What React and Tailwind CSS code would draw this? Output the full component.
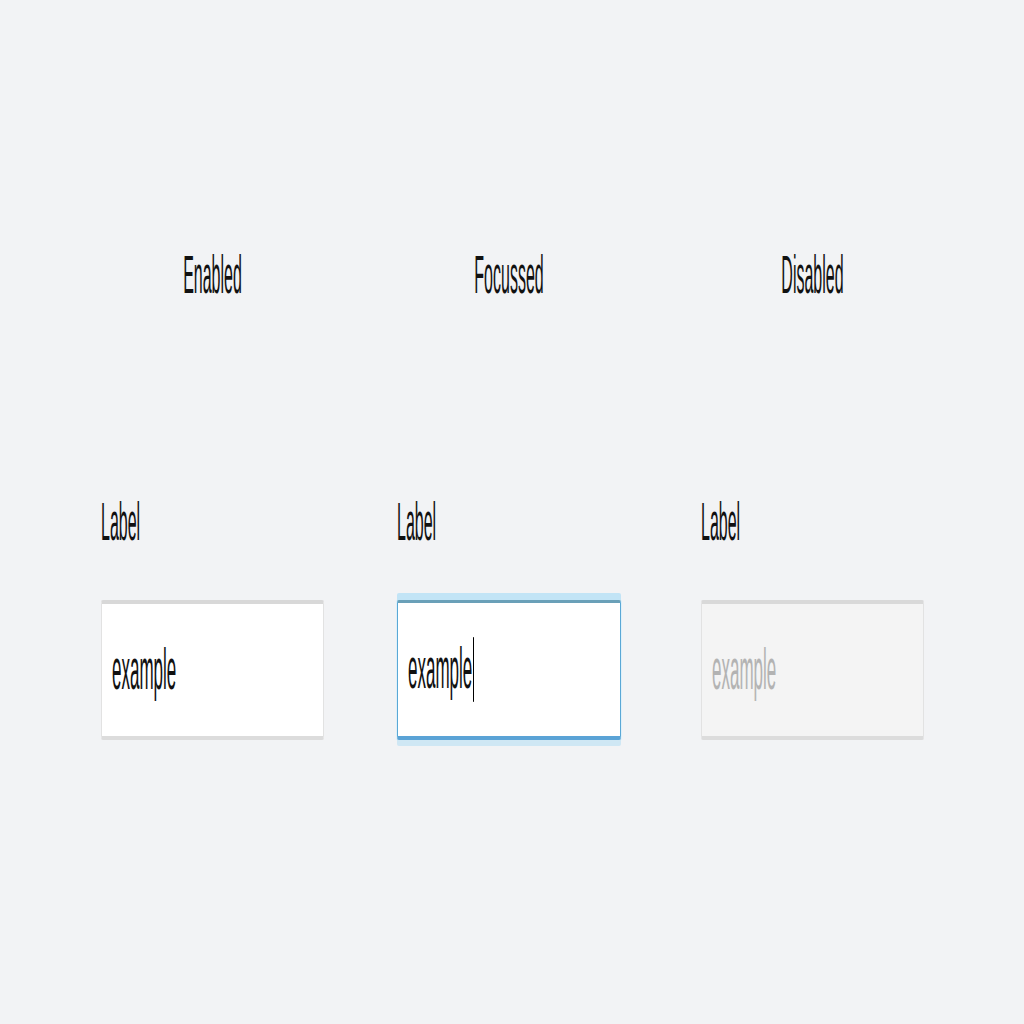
import React from 'react'

const font = "font-['Liberation_Sans',Arial,sans-serif]"

function Heading({ children }) {
  return (
    <div className="flex h-[40px] items-center justify-center">
      <span className="inline-block scale-y-[3.4] text-[16px] leading-[16px] text-[#111]">{children}</span>
    </div>
  )
}

function Label() {
  return (
    <div className="mt-[207px] flex h-[40px] items-center">
      <span className="inline-block scale-y-[3.3] text-[16px] leading-[16px] text-[#111]">Label</span>
    </div>
  )
}

function Field({ state }) {
  const box = {
    enabled: 'bg-white border-x border-x-[#e2e2e2] border-t-[4px] border-t-[#d8d8d8] border-b-[4px] border-b-[#dcdcdc]',
    focused:
      'bg-white border-x border-x-[#5aa8d6] border-t-[3px] border-t-[#6aa0b8] border-b-[4px] border-b-[#5aa3d6] shadow-[0_-7px_0_0_#c2e4f6,0_6px_0_0_#cfe7f4,0_0_0_1px_#dff0f9]',
    disabled: 'bg-[#f4f4f4] border-x border-x-[#e2e2e2] border-t-[4px] border-t-[#d9d9d9] border-b-[4px] border-b-[#dcdcdc]',
  }[state]

  return (
    <div className={`mt-[57px] flex h-[140px] items-center rounded-[2px] pl-[10px] ${box}`}>
      <span
        className={`inline-flex scale-y-[3.4] items-center text-[17px] leading-[17px] ${
          state === 'disabled' ? 'text-[#b3b3b3]' : 'text-[#111]'
        }`}
      >
        example
        {state === 'focused' && <span className="ml-px inline-block h-[19px] w-px bg-black" />}
      </span>
    </div>
  )
}

export default function App() {
  return (
    <div className={`min-h-screen bg-[#f2f3f5] ${font}`}>
      <div className="flex pl-[101px] pt-[256px]">
        <div className="w-[223px]">
          <Heading>Enabled</Heading>
          <Label />
          <Field state="enabled" />
        </div>
        <div className="ml-[73px] w-[224px]">
          <Heading>Focussed</Heading>
          <Label />
          <Field state="focused" />
        </div>
        <div className="ml-[80px] w-[223px]">
          <Heading>Disabled</Heading>
          <Label />
          <Field state="disabled" />
        </div>
      </div>
    </div>
  )
}
